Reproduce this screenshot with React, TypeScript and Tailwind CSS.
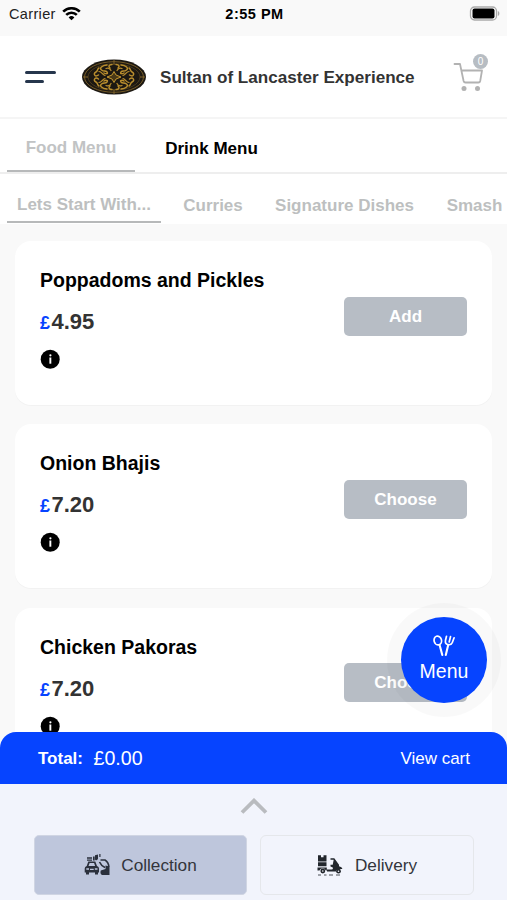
import React, { useState } from 'react';

interface Dish {
  name: string;
  price: string;
  action: string;
}

const dishes: Dish[] = [
  { name: 'Poppadoms and Pickles', price: '4.95', action: 'Add' },
  { name: 'Onion Bhajis', price: '7.20', action: 'Choose' },
  { name: 'Chicken Pakoras', price: '7.20', action: 'Choose' },
];

const categories = [
  { label: 'Lets Start With...', width: 'w-[154px]' },
  { label: 'Curries', width: 'w-[104px]' },
  { label: 'Signature Dishes', width: 'w-[159px]' },
  { label: 'Smash', width: 'w-[101px]' },
];

// one quarter of the medallion, mirrored around the centre
const quarters = ['', 'translate(66 0) scale(-1 1)', 'translate(0 38) scale(1 -1)', 'translate(66 38) scale(-1 -1)'];

function StatusBar() {
  return (
    <div className="grid h-9 shrink-0 grid-cols-[1fr_auto_1fr] items-start bg-[#f9f9f9] pt-[4px] pl-[9px] pr-[7px] text-[14.5px] leading-5 text-[#222]">
      <div className="flex items-center gap-[6px]">
        <span className="w-[47px] whitespace-nowrap tracking-[0.35px]">Carrier</span>
        <svg width="19" height="14" viewBox="0 0 19 14" fill="none" stroke="#000" strokeWidth="2.6">
          <path d="M1.2 4.700a11.8 11.8 0 0 1 16.6 0" />
          <path d="M4.2 7.900a7.5 7.5 0 0 1 10.6 0" />
          <path d="M9.5 13.300 6.6 10.400a4.1 4.1 0 0 1 5.8 0Z" fill="#000" stroke="none" />
        </svg>
      </div>
      <span className="text-[14.5px] font-bold tracking-[0.5px] text-black">2:55 PM</span>
      <svg className="mt-[2px] justify-self-end" width="31" height="15" viewBox="0 0 31 15">
        <rect x="1.5" y="1" width="26" height="13" rx="4" fill="#fff" stroke="#aaa" strokeWidth="1.3" />
        <rect x="3.5" y="2.500" width="22" height="10" rx="2" fill="#000" />
        <path d="M28.9 5v5c1-.4 1.5-1.3 1.5-2.5S29.9 5.4 28.9 5Z" fill="#aaa" />
      </svg>
    </div>
  );
}

function RestaurantLogo() {
  return (
    <svg width="66" height="38" viewBox="0 0 66 38" fill="none">
      <ellipse cx="33" cy="19" rx="32" ry="17.5" fill="#1c1812" />
      <ellipse cx="33" cy="19" rx="29.5" ry="15.3" stroke="#80632a" strokeWidth=".9" />
      <ellipse cx="33" cy="19" rx="26" ry="13.2" stroke="#5c4820" strokeWidth=".7" />
      <g stroke="#b98e2e" strokeWidth="1.5" strokeLinecap="round">
        {quarters.map((t) => (
          <g key={t} transform={t}>
            <path d="M31 6.500c-3 0-4 2-2 3.500M26 7c-5 .5-8 3-5.500 5s4 0 5.500 2-1.500 2-3 1" />
            <path d="M18 10c-2 1-1 3-3 4s-2 2.500-1 3.500 2 .5 3.500-.5" />
            <path d="M18 13.500c3 0 3 3 6 4M25 10.500c2-1 4 0 5 2" strokeWidth="1.2" />
          </g>
        ))}
      </g>
      <path d="M33 13.500l2 3.500 5 2-5 2-2 3.500-2-3.500-5-2 5-2Z" fill="#4a3916" stroke="#d1a334" strokeWidth=".9" />
      <path d="M33 2v5M33 31v5M2 19h5M59 19h5" stroke="#80632a" />
    </svg>
  );
}

function CartIcon() {
  return (
    <svg width="31" height="30" viewBox="0 0 31 30" fill="none" stroke="#b2b2b2" strokeWidth="1.8" strokeLinecap="round" strokeLinejoin="round">
      <path d="M1.5 2h5.5l3.6 17q.4 1.5 1.8 1.5h13q1.5 0 1.800-1.5L29 8.500H8.500" />
      <circle cx="11" cy="26.500" r="2.5" fill="#b2b2b2" stroke="none" />
      <circle cx="24.500" cy="26.500" r="2.5" fill="#b2b2b2" stroke="none" />
    </svg>
  );
}

function Header() {
  return (
    <header className="flex h-[83px] shrink-0 items-center border-b-2 border-[#f5f5f5] bg-white pl-[25px]">
      <button className="flex w-[31px] flex-col gap-[6px] pt-[1px]" aria-label="Open navigation">
        <span className="h-[3px] w-[31px] rounded-full bg-[#26364c]" />
        <span className="h-[3px] w-[19px] rounded-full bg-[#26364c]" />
      </button>
      <div className="ml-[25px]">
        <RestaurantLogo />
      </div>
      <h1 className="ml-[13px] w-[293px] whitespace-nowrap pt-[2px] text-[17.1px] font-bold text-[#333]">Sultan of Lancaster Experience</h1>
      <button className="relative" aria-label="Cart">
        <CartIcon />
        <span className="absolute -top-[8px] left-[20px] flex size-[15px] items-center justify-center rounded-full bg-[#b7bdc3] text-[10px] text-white">0</span>
      </button>
    </header>
  );
}

function InfoIcon() {
  return (
    <svg width="20" height="20" viewBox="0 0 20 20">
      <circle cx="10.2" cy="10.3" r="9.5" fill="#000" />
      <circle cx="10.4" cy="6.3" r="1.100" fill="#fff" />
      <path d="M9.400 8.500h1.900v6.200H9.400Z" fill="#fff" />
    </svg>
  );
}

function DishCard({ name, price, action }: Dish) {
  return (
    <article className="flex h-[164px] shrink-0 justify-between rounded-[16px] bg-white pl-[25px] pr-[25px] shadow-[0_1px_1px_rgba(0,0,0,0.03)]">
      <div className="pt-[27px]">
        <h2 className="whitespace-nowrap text-[19.5px] leading-6 font-bold text-black">{name}</h2>
        <p className="mt-[18px] flex h-6 items-baseline leading-6 font-bold text-[#333]">
          <span className="w-[11.5px] text-[18px] text-[#0644ff]">£</span>
          <span className="text-[22px]">{price}</span>
        </p>
        <div className="mt-[15px]">
          <InfoIcon />
        </div>
      </div>
      <button className="mt-[55.5px] h-[39px] w-[123px] rounded-[5px] bg-[#b7bdc5] pt-px text-[17px] font-bold text-white">{action}</button>
    </article>
  );
}

function MenuButton() {
  return (
    <div className="absolute top-[603px] left-[387px] flex size-[114px] items-center justify-center rounded-full bg-black/[0.025]">
      <button className="flex size-[86px] flex-col items-center rounded-full bg-[#0644ff] pt-[17px] text-[19.5px] leading-6 text-white">
        <svg width="24" height="24" viewBox="0 0 24 24" fill="none" stroke="#fff" strokeWidth="1.7" strokeLinecap="round" strokeLinejoin="round">
          <ellipse cx="5.8" cy="6.5" rx="3.7" ry="4.400" transform="rotate(-18 5.8 6.5)" />
          <path d="M7.600 11 10.300 21" strokeWidth="2.1" />
          <path d="M14.500 2.300 13.500 6.300c-.5 2.500.5 3.800 2.500 4.300 2 .5 3.600-.5 4.400-2.300l1.700-4.500M18.500 2.700 17.200 8" />
          <path d="M16.200 11 13.800 21" strokeWidth="2.1" />
        </svg>
        <span className="mt-px">Menu</span>
      </button>
    </div>
  );
}

function CollectionIcon() {
  return (
    <svg width="26" height="22" viewBox="0 0 26 22" fill="#2b303c">
      <path d="M3 3.200h5v1.500H3ZM3 5.400h5v1.300H3ZM9 2.500h1.700v4H9ZM11 1.200l3-.7v4.300q-1.500 2.700-3 .7ZM15.300 0h1.200v3h-1.200Z" />
      <path d="M4.300 7.500 2.700 12Q.7 12.600.7 14.500v4h1.300v2h3v-2h6v2h3v-2h1v-4q0-1.900-2-2.500L11.300 7.500Zm1.300 1.600h4.500l1 2.900H4.500ZM2.300 14.200h2.700v1.500H2.300Zm8.500 0h2.700v1.500h-2.700ZM6 14.800h3.700v1.200H6Z" fillRule="evenodd" />
      <path d="M16.500 6h4.500q3.800 2.500 3.800 7" fill="none" stroke="#2b303c" strokeWidth="1.5" />
      <path d="M15.500 8q1.500 3.500 5.500 5.500" fill="none" stroke="#2b303c" strokeWidth="1.6" />
      <path d="M21.500 11.500 25.500 12.500V21h-7.500q-2.300-1.500-1.200-4.500l4.700-1.500Z" />
    </svg>
  );
}

function DeliveryIcon() {
  return (
    <svg width="26" height="21" viewBox="0 0 26 21" fill="#22262c">
      <path d="M1 .3h3v2h2.500v-2h3v6.200H1ZM1 7.300h8.500v4H1ZM.5 12.500h9.300v3h-1a3.300 3.300 0 0 0-6.300 0h-2Z" />
      <path d="M13.500 3.200h3.800l4.700 6.500v1.500q3 .5 3.500 2.800h-2.700q-3-.5-4 2.500H10v-2h4.500q1.500 0 1.500-1.500 0-1-2.500-1.500V9.700h2.200l1-5H13.500Z" />
      <circle cx="5.8" cy="16" r="2.4" />
      <circle cx="21.5" cy="16.2" r="2.4" />
      <circle cx="5.8" cy="16" r=".8" fill="#f2f4fc" />
      <circle cx="21.5" cy="16.2" r=".8" fill="#f2f4fc" />
      <path d="M1 20h3M7 20h2.500M12 20h4M19 20h4" stroke="#22262c" strokeWidth=".8" />
    </svg>
  );
}

function OrderFooter() {
  return (
    <footer className="relative -mt-4 flex h-[168px] shrink-0 flex-col">
      <div className="flex h-[52px] shrink-0 items-center rounded-t-[16px] bg-[#0644ff] pt-px pl-[38px] pr-[37px] text-white">
        <span className="w-[55.5px] whitespace-nowrap pt-px text-[17px] font-bold">Total:</span>
        <span className="text-[19.6px]">£0.00</span>
        <span className="ml-auto text-[17px]">View cart</span>
      </div>
      <div className="flex-1 bg-[#f2f4fc] pt-[14px]">
        <svg className="mx-auto" width="28" height="17" viewBox="0 0 28 17" fill="none" stroke="#b9bbbf" strokeWidth="3.8">
          <path d="M2 14.5 14 2.6l12 11.9" />
        </svg>
        <div className="mt-[20px] flex gap-[13px] pl-[34px]">
          <button className="flex h-[60px] w-[213px] items-center justify-center gap-[11px] rounded-[5px] border border-[#d0d5e3] bg-[#bec6dc] text-[17.2px] text-[#33353b]">
            <CollectionIcon />
            <span className="whitespace-nowrap pt-px">Collection</span>
          </button>
          <button className="flex h-[60px] w-[214px] items-center justify-center gap-[12px] rounded-[6px] border border-[#e5e7eb] text-[17.2px] text-[#33353b]">
            <DeliveryIcon />
            <span className="pt-px">Delivery</span>
          </button>
        </div>
      </div>
    </footer>
  );
}

export default function App() {
  const [category, setCategory] = useState(0);

  return (
    <div className="relative flex h-[900px] w-[507px] flex-col overflow-hidden bg-[#f9f9f9] font-['Liberation_Sans',Arial,sans-serif]">
      <StatusBar />
      <Header />
      <nav className="flex h-[55px] shrink-0 border-b-2 border-[#eee] bg-white pl-[7px] text-[17px] font-bold">
        <button className="h-[53px] w-[128px] border-b-2 border-[#b7b9ba] pt-[6px] text-[#c1c3c4]">Food Menu</button>
        <button className="w-[153px] pt-[6px] text-black">Drink Menu</button>
      </nav>
      <nav className="flex h-[50px] shrink-0 overflow-hidden bg-white pl-[7px] text-[17px] font-bold text-[#bdbfc0]">
        {categories.map((item, index) => (
          <button
            key={item.label}
            className={`${item.width} shrink-0 whitespace-nowrap pt-[14px] ${index === category ? 'mb-px border-b-2 border-[#b7b9ba]' : ''}`}
            onClick={() => setCategory(index)}
          >
            {item.label}
          </button>
        ))}
      </nav>
      <main className="flex min-h-0 flex-1 flex-col gap-[19.3px] overflow-hidden px-[15px] pt-[17px]">
        {dishes.map((dish) => (
          <DishCard key={dish.name} {...dish} />
        ))}
      </main>
      <OrderFooter />
      <MenuButton />
    </div>
  );
}
